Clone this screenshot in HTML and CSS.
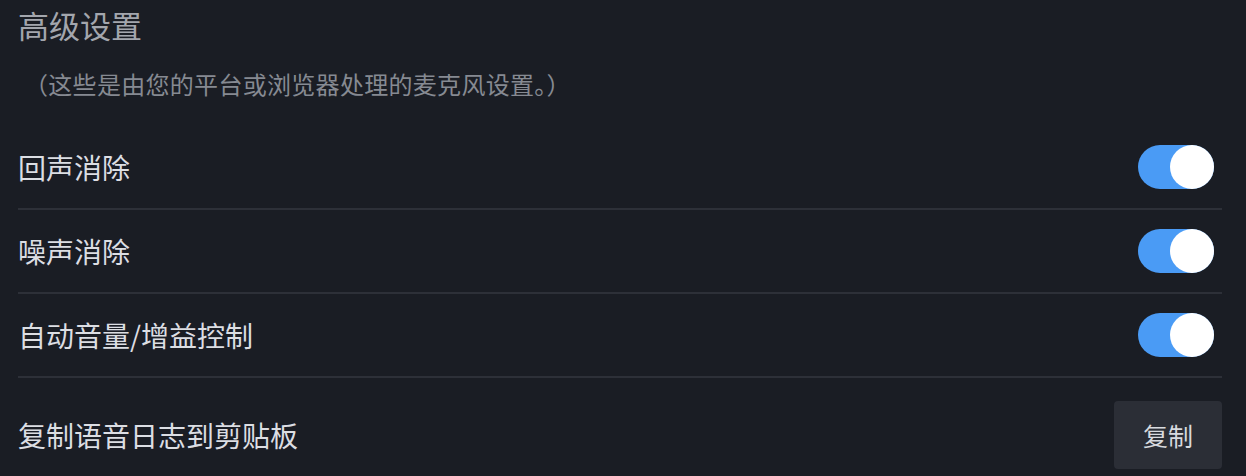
FILE: index.html
```html
<!DOCTYPE html>
<html lang="zh-CN">
<head>
<meta charset="utf-8">
<link rel="stylesheet" href="styles.css">
</head>
<body>
<section class="panel">
  <h2 class="title">高级设置</h2>
  <p class="subtitle">（这些是由您的平台或浏览器处理的麦克风设置。）</p>
  <div class="row">
    <span class="label">回声消除</span>
    <span class="toggle on"><span class="knob"></span></span>
  </div>
  <div class="row">
    <span class="label">噪声消除</span>
    <span class="toggle on"><span class="knob"></span></span>
  </div>
  <div class="row">
    <span class="label">自动音量/增益控制</span>
    <span class="toggle on"><span class="knob"></span></span>
  </div>
  <div class="row last">
    <span class="label">复制语音日志到剪贴板</span>
    <button class="btn">复制</button>
  </div>
</section>
</body>
</html>
```
FILE: styles.css
```css
html, body {
  margin: 0;
  padding: 0;
  background: #1a1d24;
  height: 100%;
  overflow: hidden;
}
body {
  font-family: "Noto Sans CJK SC", "Noto Sans", sans-serif;
}
.panel {
  padding: 0 24px 0 18px;
}
.title {
  margin: 4px 0 0;
  font-size: 31px;
  line-height: 41px;
  font-weight: 400;
  color: #a3a6ad;
}
.subtitle {
  margin: 23px 0 0;
  padding-left: 6px;
  font-size: 24px;
  line-height: 32px;
  letter-spacing: 0.3px;
  color: #868a92;
}
.row {
  margin-top: 0;
  height: 82px;
  border-bottom: 2px solid #2d3038;
  display: flex;
  align-items: center;
  justify-content: space-between;
}
.subtitle + .row {
  margin-top: 26px;
}
.row.last {
  border-bottom: none;
  height: auto;
  padding-top: 23px;
}
.label {
  font-size: 28px;
  line-height: 36px;
  color: #dcdee3;
}
.toggle {
  width: 76px;
  height: 44px;
  border-radius: 22px;
  background: #4a9bf5;
  display: flex;
  justify-content: flex-end;
  margin-right: 8px;
}
.knob {
  width: 44px;
  height: 44px;
  border-radius: 50%;
  background: #ffffff;
}
.btn {
  width: 108px;
  height: 68px;
  border: none;
  border-radius: 4px;
  background: #2b2e36;
  color: #d8dadf;
  font-family: "Noto Sans CJK SC", "Noto Sans", sans-serif;
  font-size: 25px;
  padding: 0;
}
```
